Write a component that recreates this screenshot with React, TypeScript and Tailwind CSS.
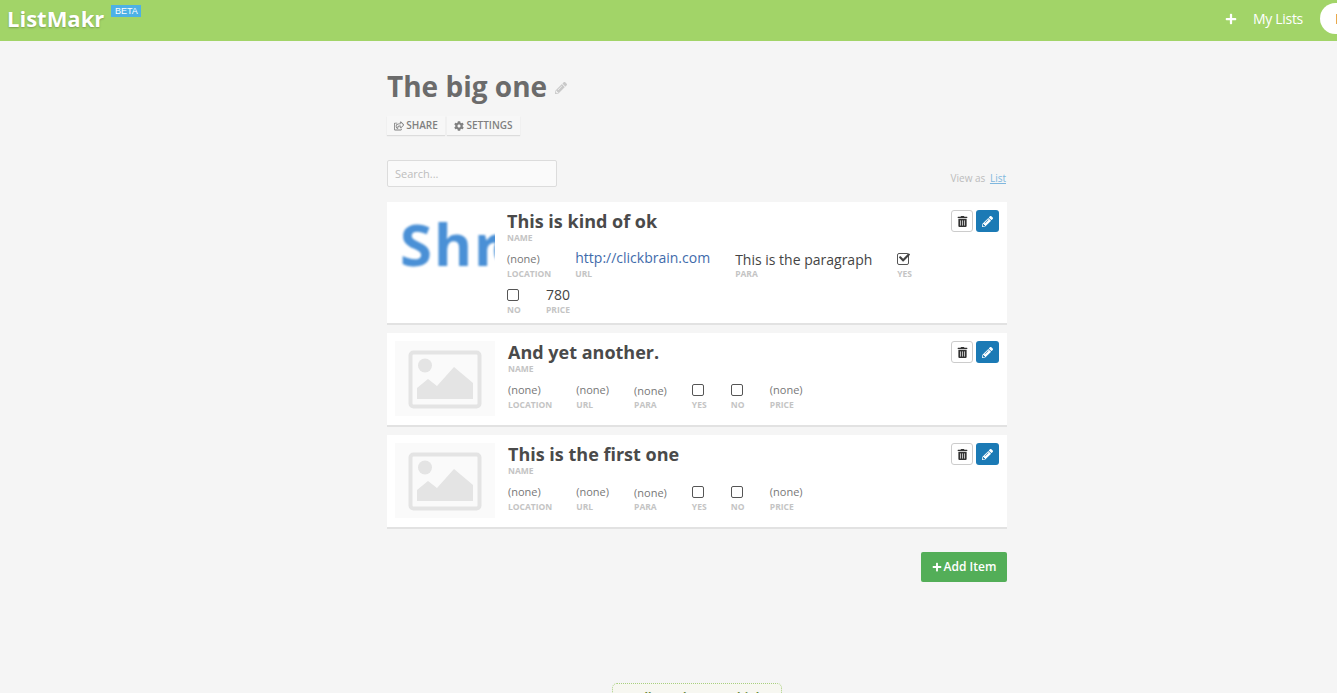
import React from "react";
import { FaCog, FaPencilAlt, FaPlus, FaRegShareSquare, FaTrashAlt, FaCheck } from "react-icons/fa";

type Field = {
  label: string;
  value?: string;
  kind?: "text" | "link" | "para" | "checked" | "unchecked";
};

type Item = {
  title: string;
  fields: Field[];
  hasLogo?: boolean;
};

const none: Field[] = [
  { label: "LOCATION", value: "(none)" },
  { label: "URL", value: "(none)", kind: "link" },
  { label: "PARA", value: "(none)", kind: "para" },
  { label: "YES", kind: "unchecked" },
  { label: "NO", kind: "unchecked" },
  { label: "PRICE", value: "(none)" },
];

const items: Item[] = [
  {
    title: "This is kind of ok",
    hasLogo: true,
    fields: [
      { label: "LOCATION", value: "(none)" },
      { label: "URL", value: "http://clickbrain.com", kind: "link" },
      { label: "PARA", value: "This is the paragraph", kind: "para" },
      { label: "YES", kind: "checked" },
      { label: "NO", kind: "unchecked" },
      { label: "PRICE", value: "780" },
    ],
  },
  { title: "And yet another.", fields: none },
  { title: "This is the first one", fields: none },
];

const Placeholder = () => (
  <div className="w-[100px] h-[75px] bg-[#fafafa] shrink-0">
    <svg viewBox="0 0 100 75" className="w-full h-full">
      <rect x="15.5" y="11.5" width="69" height="54" rx="3" fill="none" stroke="#e4e4e4" strokeWidth="4" />
      <circle cx="30" cy="24.5" r="7" fill="#e4e4e4" />
      <path d="M22 58 V47 L33 38 L42 45 L59 26 L78 42 V58 Z" fill="#e4e4e4" />
    </svg>
  </div>
);

const Logo = () => (
  <div className="w-[100px] h-[75px] shrink-0 overflow-hidden">
    <span className="block font-bold text-[58px] leading-[70px] mt-[-1px] ml-[5px] text-[#4a90d6] blur-[1px] whitespace-nowrap tracking-[2px]">
      Shr<span className="ml-[-11px]">ek</span>
    </span>
  </div>
);

const FieldBox = ({ field }: { field: Field }) => {
  const kind = field.kind ?? "text";
  const isNone = field.value === "(none)";
  const isCheck = kind === "unchecked" || kind === "checked";
  const wide = kind === "para" || kind === "link";
  return (
    <div className={`flex flex-col ${wide ? "pr-[25px]" : "pr-[24px]"} ${isCheck ? "min-w-[39px]" : ""}`}>
      <div className="h-[20px] flex items-end">
        {kind === "text" && (
          <span className={`leading-[18px] mb-[1px] ${isNone ? "text-[11px] text-[#777]" : "text-[14px] text-[#444]"}`}>
            {field.value}
          </span>
        )}
        {kind === "link" && (
          <span className={`mb-[1px] ${isNone ? "leading-[18px] text-[11px] text-[#777]" : "leading-[20px] text-[14px] text-[#3f6bab]"}`}>
            {field.value}
          </span>
        )}
        {kind === "para" && (
          <span className={`leading-[20px] mb-[-1px] ${isNone ? "text-[11px] text-[#777]" : "text-[14px] text-[#444]"}`}>
            {field.value}
          </span>
        )}
        {isCheck && (
          <span className="relative block w-[12px] h-[12px] mb-[4px] rounded-[2px] border border-[#555] bg-white">
            {kind === "checked" && <FaCheck className="absolute left-[1px] top-[-2px] text-[11px] text-[#444]" />}
          </span>
        )}
      </div>
      <span className="text-[8.5px] leading-[10px] font-bold text-[#c4c4c4]">{field.label}</span>
    </div>
  );
};

const ItemCard = ({ item }: { item: Item }) => (
  <div
    className={`relative bg-white shadow-[0_2px_0_#e2e2e2] mb-[10px] pl-[8px] pr-[8px] pt-[8px] flex ${
      item.hasLogo ? "pb-[8px] gap-[12px]" : "pb-[9px] gap-[13px]"
    }`}
  >
    {item.hasLogo ? <Logo /> : <Placeholder />}
    <div className="flex-1 min-w-0">
      <h3 className="text-[18px] leading-[24px] font-bold text-[#4a4a4a] mt-[-1px]">{item.title}</h3>
      <div className="text-[8.5px] leading-[10px] font-bold text-[#c4c4c4]">NAME</div>
      <div className="flex flex-wrap gap-y-[6px] w-[440px] mt-[6px]">
        {item.fields.map((f) => (
          <FieldBox key={f.label} field={f} />
        ))}
      </div>
    </div>
    <div className="absolute top-[8px] right-[8px] flex gap-[3px]">
      <button className="w-[22px] h-[22px] flex items-center justify-center rounded-[3px] border border-[#ccc] bg-white">
        <FaTrashAlt className="text-[11px] text-[#333]" />
      </button>
      <button className="w-[23px] h-[22px] flex items-center justify-center rounded-[3px] bg-[#1b7ab5]">
        <FaPencilAlt className="text-[11px] text-white" />
      </button>
    </div>
  </div>
);

export default function App() {
  return (
    <div className="relative h-[693px] overflow-hidden bg-[#f5f5f5] font-['Open_Sans',sans-serif]">
      <header className="h-[41px] bg-[#a2d468] flex items-start overflow-hidden">
        <span className="ml-[7px] mt-[2px] text-[22px] leading-[32px] font-bold text-white [text-shadow:0_1px_2px_rgba(0,0,0,0.25)]">
          ListMakr
        </span>
        <span className="ml-[7px] mt-[5px] h-[12px] w-[30px] bg-[#4db1e6] text-white text-[9px] leading-[12px] text-center font-['Liberation_Sans',sans-serif]">
          BETA
        </span>
        <div className="ml-auto flex items-center h-[37px]">
          <FaPlus className="text-[12px] text-white mr-[16px]" />
          <span className="text-[14px] text-white mr-[17px] tracking-[-0.3px]">My Lists</span>
          <div className="w-[17px] h-[31px] rounded-l-full bg-white flex items-center justify-end">
            <div className="w-[1px] h-[10px] bg-[#e9a94d]" />
          </div>
        </div>
      </header>

      <main className="w-[620px] ml-[387px]">
        <div className="flex items-center mt-[26px] h-[38px]">
          <h1 className="text-[28px] leading-[38px] font-bold text-[#6b6b6b]">The big one</h1>
          <FaPencilAlt className="ml-[8px] mt-[3px] text-[12px] text-[#c9c9c9]" />
        </div>

        <div className="flex gap-[2px] mt-[11px]">
          <button className="w-[58px] h-[19px] flex items-center justify-center gap-[2px] bg-[#f7f7f7] shadow-[0_1px_1px_#dcdcdc] text-[10px] font-semibold text-[#808080]">
            <FaRegShareSquare className="text-[10px]" /> SHARE
          </button>
          <button className="w-[73px] h-[19px] flex items-center justify-center gap-[2px] bg-[#f7f7f7] shadow-[0_1px_1px_#dcdcdc] text-[10px] font-semibold text-[#808080]">
            <FaCog className="text-[10px]" /> SETTINGS
          </button>
        </div>

        <div className="flex items-end justify-between mt-[25px] mb-[15px]">
          <div className="w-[170px] h-[27px] px-[7px] pt-[1px] flex items-center bg-[#fafafa] border border-[#dcdcdc] rounded-[2px] text-[11px] text-[#bdbdbd]">
            Search...
          </div>
          <div className="text-[10px] text-[#bcbcbc] mr-[1px] mb-[1px]">
            View as <span className="ml-[2px] text-[#7fb7de] underline">List</span>
          </div>
        </div>

        {items.map((item) => (
          <ItemCard key={item.title} item={item} />
        ))}

        <div className="flex justify-end mt-[25px]">
          <button className="w-[86px] h-[30px] flex items-center justify-center gap-[2px] rounded-[2px] bg-[#53ae58] text-white text-[12px] font-semibold">
            <FaPlus className="text-[10px]" /> Add Item
          </button>
        </div>
      </main>

      <div className="absolute left-[612px] top-[683px] w-[170px] h-[30px] rounded-t-[5px] border border-dotted border-[#a9cf7f] bg-[#f7f7f1] text-center text-[11.5px] leading-[14px] pt-[7px] font-bold text-[#6b8a3e]">
        Tell Us What You Think
      </div>
    </div>
  );
}
